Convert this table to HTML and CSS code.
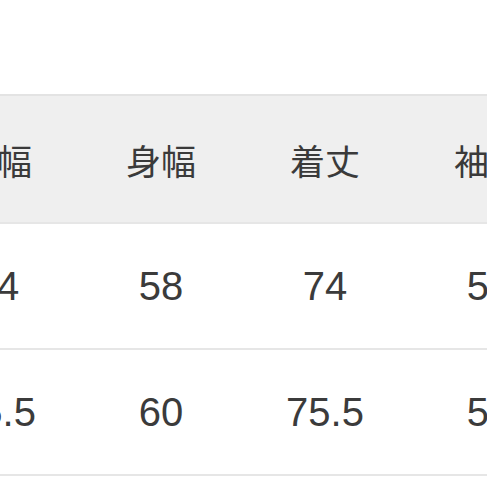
FILE: index.html
```html
<!DOCTYPE html>
<html lang="ja">
<head>
<meta charset="utf-8">
<link rel="stylesheet" href="styles.css">
</head>
<body>
<div class="size-table">
  <div class="row head">
    <div class="cell">肩幅</div>
    <div class="cell">身幅</div>
    <div class="cell">着丈</div>
    <div class="cell">袖丈</div>
  </div>
  <div class="row">
    <div class="cell">44</div>
    <div class="cell">58</div>
    <div class="cell">74</div>
    <div class="cell">58</div>
  </div>
  <div class="row">
    <div class="cell">45.5</div>
    <div class="cell">60</div>
    <div class="cell">75.5</div>
    <div class="cell">59</div>
  </div>
</div>
</body>
</html>
```

FILE: styles.css
```css
html, body {
  margin: 0;
  padding: 0;
  background: #ffffff;
  overflow: hidden;
  width: 487px;
  height: 487px;
}
.size-table {
  margin-top: 94px;
  margin-left: -85px;
  width: 656px;
  border-top: 2px solid #e3e3e3;
}
.row {
  display: grid;
  grid-template-columns: repeat(4, 164px);
  height: 124px;
  border-bottom: 2px solid #e6e6e6;
  color: #3b3b3b;
  font-family: "Liberation Sans", Arial, sans-serif;
  font-size: 40px;
}
.row.head {
  background: #efefef;
  height: 126px;
  font-family: "Noto Sans CJK JP", "Noto Sans", sans-serif;
  font-size: 35px;
  color: #3a3a3a;
}
.cell {
  display: flex;
  align-items: center;
  justify-content: center;
}
```
